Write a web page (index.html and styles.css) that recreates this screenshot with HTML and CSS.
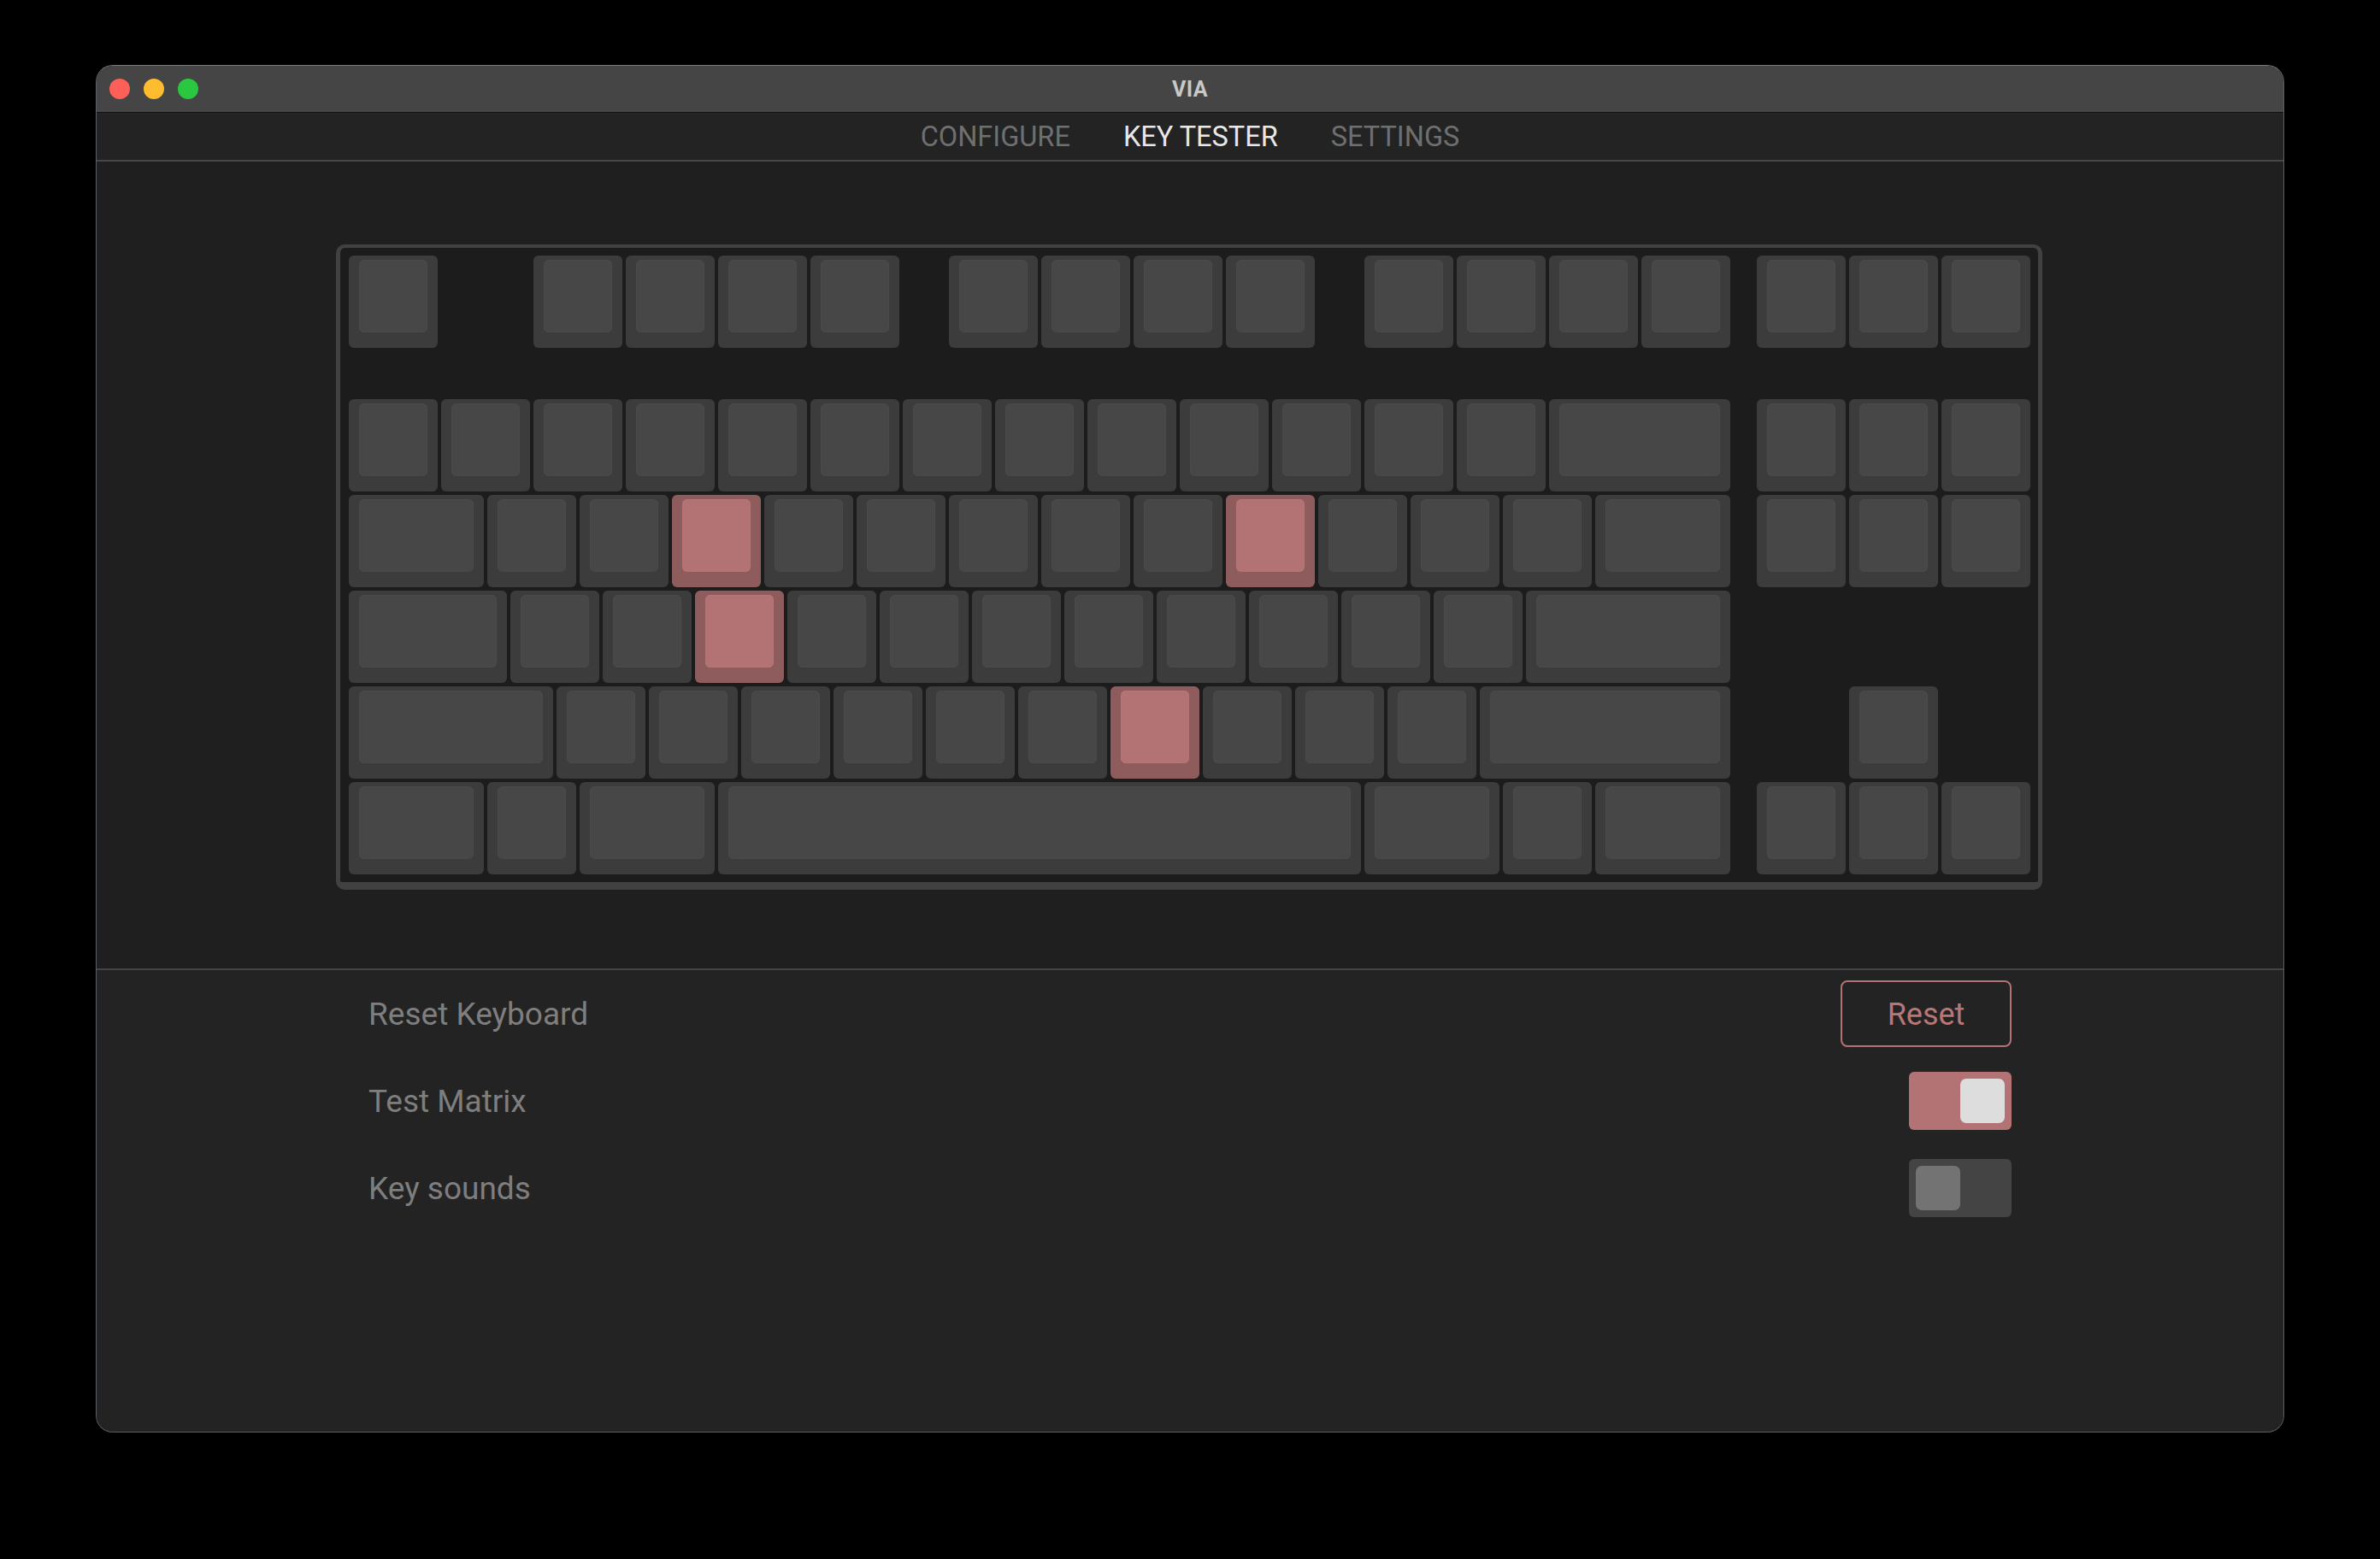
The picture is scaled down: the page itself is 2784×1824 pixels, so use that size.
FILE: index.html
```html
<!DOCTYPE html>
<html>
<head>
<meta charset="utf-8">
<title>VIA</title>
<link rel="stylesheet" href="styles.css">
</head>
<body>
<div class="window">
  <div class="titlebar">
    <div class="lights">
      <span class="light red"></span>
      <span class="light yellow"></span>
      <span class="light green"></span>
    </div>
    <div class="title">VIA</div>
    <div></div>
  </div>
  <nav class="nav">
    <span class="tab">CONFIGURE</span>
    <span class="tab active">KEY TESTER</span>
    <span class="tab">SETTINGS</span>
  </nav>
  <section class="board-area">
    <div class="board">
      <div class="row frow">
        <div class="key u1"><div class="cap"></div></div>
        <div class="key u1 g1"><div class="cap"></div></div>
        <div class="key u1"><div class="cap"></div></div>
        <div class="key u1"><div class="cap"></div></div>
        <div class="key u1"><div class="cap"></div></div>
        <div class="key u1 g05"><div class="cap"></div></div>
        <div class="key u1"><div class="cap"></div></div>
        <div class="key u1"><div class="cap"></div></div>
        <div class="key u1"><div class="cap"></div></div>
        <div class="key u1 g05"><div class="cap"></div></div>
        <div class="key u1"><div class="cap"></div></div>
        <div class="key u1"><div class="cap"></div></div>
        <div class="key u1"><div class="cap"></div></div>
        <div class="key u1 g025"><div class="cap"></div></div>
        <div class="key u1"><div class="cap"></div></div>
        <div class="key u1"><div class="cap"></div></div>
      </div>
      <div class="row">
        <div class="key u1"><div class="cap"></div></div>
        <div class="key u1"><div class="cap"></div></div>
        <div class="key u1"><div class="cap"></div></div>
        <div class="key u1"><div class="cap"></div></div>
        <div class="key u1"><div class="cap"></div></div>
        <div class="key u1"><div class="cap"></div></div>
        <div class="key u1"><div class="cap"></div></div>
        <div class="key u1"><div class="cap"></div></div>
        <div class="key u1"><div class="cap"></div></div>
        <div class="key u1"><div class="cap"></div></div>
        <div class="key u1"><div class="cap"></div></div>
        <div class="key u1"><div class="cap"></div></div>
        <div class="key u1"><div class="cap"></div></div>
        <div class="key u2"><div class="cap"></div></div>
        <div class="key u1 g025"><div class="cap"></div></div>
        <div class="key u1"><div class="cap"></div></div>
        <div class="key u1"><div class="cap"></div></div>
      </div>
      <div class="row">
        <div class="key u150"><div class="cap"></div></div>
        <div class="key u1"><div class="cap"></div></div>
        <div class="key u1"><div class="cap"></div></div>
        <div class="key u1 pressed"><div class="cap"></div></div>
        <div class="key u1"><div class="cap"></div></div>
        <div class="key u1"><div class="cap"></div></div>
        <div class="key u1"><div class="cap"></div></div>
        <div class="key u1"><div class="cap"></div></div>
        <div class="key u1"><div class="cap"></div></div>
        <div class="key u1 pressed"><div class="cap"></div></div>
        <div class="key u1"><div class="cap"></div></div>
        <div class="key u1"><div class="cap"></div></div>
        <div class="key u1"><div class="cap"></div></div>
        <div class="key u150"><div class="cap"></div></div>
        <div class="key u1 g025"><div class="cap"></div></div>
        <div class="key u1"><div class="cap"></div></div>
        <div class="key u1"><div class="cap"></div></div>
      </div>
      <div class="row">
        <div class="key u175"><div class="cap"></div></div>
        <div class="key u1"><div class="cap"></div></div>
        <div class="key u1"><div class="cap"></div></div>
        <div class="key u1 pressed"><div class="cap"></div></div>
        <div class="key u1"><div class="cap"></div></div>
        <div class="key u1"><div class="cap"></div></div>
        <div class="key u1"><div class="cap"></div></div>
        <div class="key u1"><div class="cap"></div></div>
        <div class="key u1"><div class="cap"></div></div>
        <div class="key u1"><div class="cap"></div></div>
        <div class="key u1"><div class="cap"></div></div>
        <div class="key u1"><div class="cap"></div></div>
        <div class="key u225"><div class="cap"></div></div>
      </div>
      <div class="row">
        <div class="key u225"><div class="cap"></div></div>
        <div class="key u1"><div class="cap"></div></div>
        <div class="key u1"><div class="cap"></div></div>
        <div class="key u1"><div class="cap"></div></div>
        <div class="key u1"><div class="cap"></div></div>
        <div class="key u1"><div class="cap"></div></div>
        <div class="key u1"><div class="cap"></div></div>
        <div class="key u1 pressed"><div class="cap"></div></div>
        <div class="key u1"><div class="cap"></div></div>
        <div class="key u1"><div class="cap"></div></div>
        <div class="key u1"><div class="cap"></div></div>
        <div class="key u275"><div class="cap"></div></div>
        <div class="key u1 g125"><div class="cap"></div></div>
      </div>
      <div class="row">
        <div class="key u150"><div class="cap"></div></div>
        <div class="key u1"><div class="cap"></div></div>
        <div class="key u150"><div class="cap"></div></div>
        <div class="key u7"><div class="cap"></div></div>
        <div class="key u150"><div class="cap"></div></div>
        <div class="key u1"><div class="cap"></div></div>
        <div class="key u150"><div class="cap"></div></div>
        <div class="key u1 g025"><div class="cap"></div></div>
        <div class="key u1"><div class="cap"></div></div>
        <div class="key u1"><div class="cap"></div></div>
      </div>
    </div>
  </section>
  <section class="settings">
    <div class="settings-inner">
      <div class="setting">
        <span class="label">Reset Keyboard</span>
        <button class="reset-btn">Reset</button>
      </div>
      <div class="setting">
        <span class="label">Test Matrix</span>
        <span class="toggle on"><span class="knob"></span></span>
      </div>
      <div class="setting">
        <span class="label">Key sounds</span>
        <span class="toggle off"><span class="knob"></span></span>
      </div>
    </div>
  </section>
</div>
</body>
</html>
```
FILE: styles.css
```css
* { box-sizing: border-box; }
html, body { margin: 0; padding: 0; background: #000; }
body {
  width: 2784px;
  height: 1824px;
  padding: 76px 0 0 112px;
  font-family: Roboto, "Liberation Sans", sans-serif;
}
.window {
  width: 2560px;
  height: 1600px;
  border: 1px solid #5b5f66;
  border-top-color: #7a7a7a;
  border-radius: 20px;
  overflow: hidden;
  background: #232323;
  display: flex;
  flex-direction: column;
}
.titlebar {
  height: 55px;
  flex: none;
  background: #454545;
  border-bottom: 1px solid #111;
  display: grid;
  grid-template-columns: 1fr auto 1fr;
  align-items: center;
}
.lights {
  display: flex;
  gap: 16px;
  padding-left: 15px;
}
.light {
  width: 24px;
  height: 24px;
  border-radius: 50%;
  display: block;
}
.red { background: #fe5f57; }
.yellow { background: #febc2e; }
.green { background: #29c840; }
.title {
  font-weight: 700;
  font-size: 25px;
  color: #c8c8c8;
  letter-spacing: 0.5px;
}
.nav {
  height: 57px;
  flex: none;
  background: #232323;
  border-bottom: 2px solid #474747;
  display: flex;
  justify-content: center;
  align-items: center;
  gap: 62px;
  font-size: 32.5px;
}
.tab { color: #6f6f6f; }
.tab.active { color: #e8e8e8; }
.board-area {
  flex: none;
  height: 946px;
  background: #1f1f1f;
  border-bottom: 2px solid #444;
  padding: 97px 2px 0 0;
  display: flex;
  justify-content: center;
  align-items: flex-start;
}
.board {
  width: 1996px;
  border-style: solid;
  border-color: #414141;
  border-width: 4px 5px 9px 5px;
  border-radius: 10px;
  background: #1c1c1c;
  padding: 9px 9px 9px 10px;
  display: flex;
  flex-direction: column;
  gap: 4px;
}
.row {
  display: flex;
  gap: 4px;
  height: 108px;
}
.row.frow { margin-bottom: 56px; }
.key {
  height: 108px;
  background: #3c3c3c;
  border-radius: 6px;
  padding: 5px 12px 18px;
  flex: none;
}
.cap {
  height: 100%;
  background: #474747;
  border-radius: 6px;
  box-shadow: inset 0 0 0 1px #4a4a4a;
}
.key.pressed { background: #8e5c5d; }
.key.pressed .cap { background: #b37374; box-shadow: inset 0 0 0 1px #b67677; }
.u1 { width: 104px; }
.u150 { width: 158px; }
.u175 { width: 185px; }
.u2 { width: 212px; }
.u225 { width: 239px; }
.u275 { width: 293px; }
.u7 { width: 752px; }
.g025 { margin-left: 27px; }
.g05 { margin-left: 54px; }
.g1 { margin-left: 108px; }
.g125 { margin-left: 135px; }
.settings {
  flex: 1;
  background: #232323;
  display: flex;
  justify-content: center;
}
.settings-inner {
  width: 1922px;
  display: flex;
  flex-direction: column;
}
.setting {
  height: 102px;
  display: flex;
  justify-content: space-between;
  align-items: center;
}
.label {
  font-size: 37px;
  color: #7e7e7e;
}
.reset-btn {
  width: 200px;
  height: 78px;
  border: 2px solid #b37374;
  border-radius: 8px;
  background: transparent;
  color: #b87677;
  font-family: Roboto, "Liberation Sans", sans-serif;
  font-size: 36px;
  padding: 2px 0 0;
}
.toggle {
  width: 120px;
  height: 68px;
  border-radius: 6px;
  padding: 8px;
  display: flex;
}
.toggle.on { background: #b37374; justify-content: flex-end; }
.toggle.off { background: #444444; justify-content: flex-start; }
.knob {
  width: 52px;
  height: 52px;
  border-radius: 7px;
  display: block;
}
.toggle.on .knob { background: #dddddd; }
.toggle.off .knob { background: #737373; }
```
